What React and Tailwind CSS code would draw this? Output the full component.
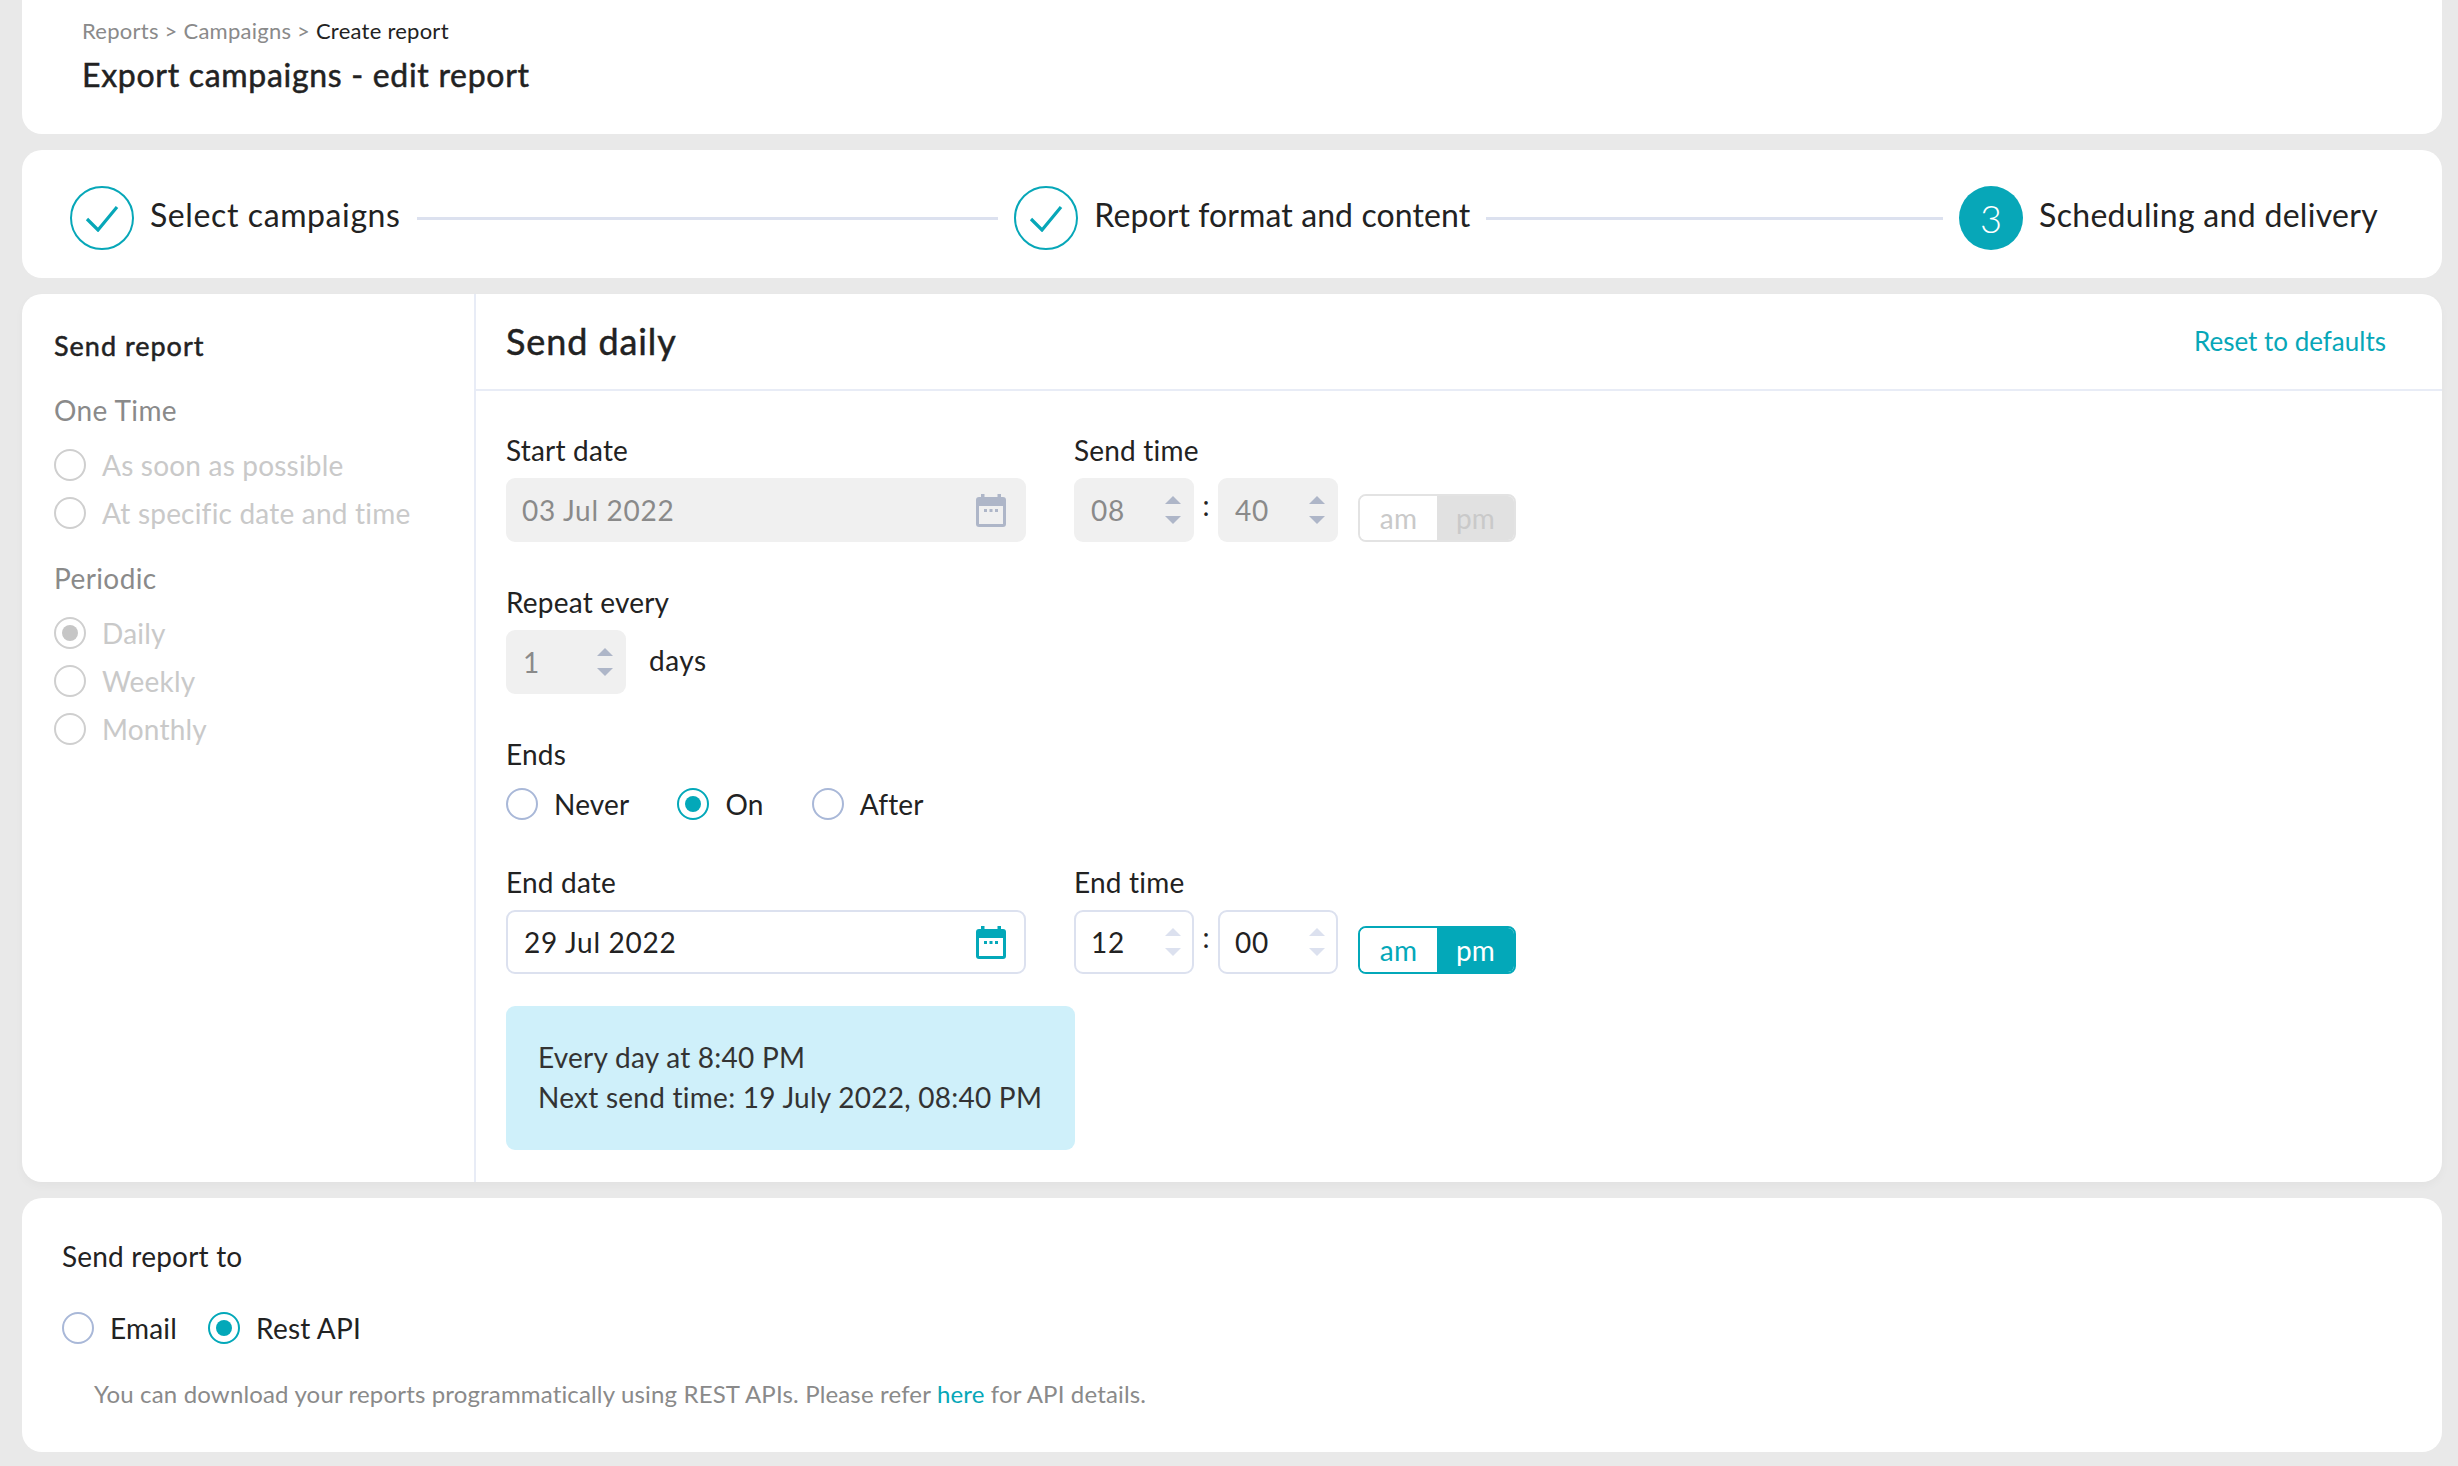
import React from "react";

function CheckCircle() {
  return (
    <div className="flex h-[64px] w-[64px] shrink-0 items-center justify-center rounded-full border-2 border-[#07a7b8]">
      <svg width="34" height="27" viewBox="0 0 34 27" fill="none">
        <path d="M2 14 L13 25 L32 2" stroke="#07a7b8" strokeWidth="3.2" />
      </svg>
    </div>
  );
}

function Step({ label, number, tracking }) {
  return (
    <div className="flex shrink-0 items-center">
      {number ? (
        <div className="flex h-[64px] w-[64px] shrink-0 items-center justify-center rounded-full bg-[#07a7b8] text-[38px] font-light text-white">
          {number}
        </div>
      ) : (
        <CheckCircle />
      )}
      <span className={`ml-[16px] -mt-[6px] text-[32px] text-[#222] ${tracking}`}>{label}</span>
    </div>
  );
}

function Radio({ label, checked, disabled }) {
  let ring = "border-[#a9b8d8]";
  let dot = "bg-[#03a8b9]";
  if (checked) ring = "border-[#03a8b9]";
  if (disabled) {
    ring = "border-[#cfcfcf]";
    dot = "bg-[#c6c6c6]";
  }
  return (
    <div className="flex h-[32px] items-center">
      <span className={`flex h-[32px] w-[32px] shrink-0 items-center justify-center rounded-full border-2 ${ring}`}>
        {checked && <span className={`h-[16px] w-[16px] rounded-full ${dot}`} />}
      </span>
      <span className={`ml-[16px] text-[28px] leading-[32px] ${disabled ? "text-[#c9c9c9]" : "text-[#222]"}`}>{label}</span>
    </div>
  );
}

function CalendarIcon({ color, bg }) {
  return (
    <svg width="30" height="33" viewBox="0 0 30 33" className="shrink-0">
      <rect x="5" y="0" width="3.5" height="6" fill={color} />
      <rect x="21.5" y="0" width="3.5" height="6" fill={color} />
      <rect x="0" y="3" width="30" height="30" rx="3" fill={color} />
      <rect x="3" y="12" width="24" height="18" fill={bg} />
      <rect x="8" y="15" width="3" height="3" fill={color} />
      <rect x="13.5" y="15" width="3" height="3" fill={color} />
      <rect x="19" y="15" width="3" height="3" fill={color} />
    </svg>
  );
}

function Arrows({ color }) {
  return (
    <svg width="16" height="28" viewBox="0 0 16 28" className="shrink-0">
      <path d="M8 0 L16 8 L0 8 Z" fill={color} />
      <path d="M0 20 L16 20 L8 28 Z" fill={color} />
    </svg>
  );
}

function DateInput({ value, disabled }) {
  return (
    <div
      className={`flex h-[64px] w-[520px] items-center justify-between rounded-[9px] text-[28px] tracking-[0.7px] ${
        disabled ? "bg-[#f0f0f0] pl-[16px] pr-[20px] text-[#8a8a8a]" : "border-2 border-[#dce1ef] bg-white pl-[16px] pr-[18px] text-[#222]"
      }`}
    >
      <span>{value}</span>
      <CalendarIcon color={disabled ? "#aeb6c8" : "#03a8b9"} bg={disabled ? "#f0f0f0" : "#ffffff"} />
    </div>
  );
}

function NumberInput({ value, disabled }) {
  return (
    <div
      className={`flex h-[64px] w-[120px] items-center justify-between rounded-[9px] text-[28px] tracking-[0.8px] ${
        disabled ? "bg-[#f0f0f0] pl-[17px] pr-[13px] text-[#8a8a8a]" : "border-2 border-[#dce1ef] bg-white pl-[15px] pr-[11px] text-[#222]"
      }`}
    >
      <span>{value}</span>
      <Arrows color={disabled ? "#aeb6c8" : "#dce1ef"} />
    </div>
  );
}

function AmPm({ disabled }) {
  return (
    <div
      className={`ml-[20px] flex h-[48px] w-[158px] self-end overflow-hidden rounded-[8px] border-2 text-[28px] leading-[44px] ${
        disabled ? "border-[#e3e3e3] text-[#c9c9c9]" : "border-[#03a8b9]"
      }`}
    >
      <span className={`flex-1 text-center ${disabled ? "bg-white" : "bg-white text-[#03a8b9]"}`}>am</span>
      <span className={`flex-1 text-center ${disabled ? "bg-[#e1e1e1]" : "bg-[#03a8b9] text-white"}`}>pm</span>
    </div>
  );
}

function TimeField({ label, hour, minute, disabled }) {
  return (
    <div className="ml-[48px]">
      <div className="mb-[12px] text-[28px] leading-[32px] text-[#222]">{label}</div>
      <div className="flex">
        <NumberInput value={hour} disabled={disabled} />
        <span className="w-[24px] text-center text-[28px] leading-[54px] text-[#222]">:</span>
        <NumberInput value={minute} disabled={disabled} />
        <AmPm disabled={disabled} />
      </div>
    </div>
  );
}

function Sidebar() {
  return (
    <div className="w-[454px] shrink-0 border-r-2 border-[#e8ecf6] pl-[32px] pt-[36px]">
      <div className="text-[27px] leading-[32px] tracking-[1px] text-[#222] [-webkit-text-stroke:0.5px_#222]">Send report</div>
      <div className="mt-[32px] text-[28px] leading-[32px] tracking-[0.4px] text-[#8a8a8a]">One Time</div>
      <div className="mt-[23px] flex flex-col gap-[16px]">
        <Radio label="As soon as possible" disabled />
        <Radio label="At specific date and time" disabled />
      </div>
      <div className="mt-[33px] text-[28px] leading-[32px] tracking-[0.4px] text-[#8a8a8a]">Periodic</div>
      <div className="mt-[23px] flex flex-col gap-[16px]">
        <Radio label="Daily" checked disabled />
        <Radio label="Weekly" disabled />
        <Radio label="Monthly" disabled />
      </div>
    </div>
  );
}

export default function App() {
  return (
    <div className="flex min-h-[1466px] flex-col gap-[16px] bg-[#e9e9e9] px-[22px] pr-[16px] font-['Lato','Noto_Sans',sans-serif] tracking-[0.2px]">
      <div className="h-[134px] rounded-b-[20px] bg-white pl-[60px] pt-[15px]">
        <div className="text-[22px] leading-[32px] tracking-[0.25px] text-[#8a8a8a]">
          Reports &gt; Campaigns &gt; <span className="text-[#222]">Create report</span>
        </div>
        <h1 className="mt-[8px] text-[32px] leading-[40px] tracking-[0.7px] text-[#222] [-webkit-text-stroke:0.5px_#222]">Export campaigns - edit report</h1>
      </div>

      <div className="flex h-[128px] items-center rounded-[20px] bg-white pl-[48px] pr-[64px] pt-[8px]">
        <Step label="Select campaigns" tracking="tracking-[0.6px]" />
        <div className="mx-[16px] h-[3px] flex-[582_1_0%] bg-[#dce1ef]" />
        <Step label="Report format and content" tracking="tracking-[0.1px]" />
        <div className="mx-[16px] h-[3px] flex-[457_1_0%] bg-[#dce1ef]" />
        <Step label="Scheduling and delivery" number="3" tracking="tracking-[0.3px]" />
      </div>

      <div className="flex h-[888px] rounded-[20px] bg-white shadow-[0_4px_10px_rgba(0,0,0,0.03)]">
        <Sidebar />
        <div className="flex-1">
          <div className="flex h-[97px] items-center justify-between border-b-2 border-[#e8ecf6] pl-[30px] pr-[56px]">
            <h2 className="-mt-[2px] text-[36px] tracking-[0.9px] text-[#222] [-webkit-text-stroke:0.5px_#222]">Send daily</h2>
            <span className="text-[26px] tracking-normal text-[#07a7b8]">Reset to defaults</span>
          </div>
          <div className="pl-[30px] pt-[43px]">
            <div className="flex">
              <div>
                <div className="mb-[12px] text-[28px] leading-[32px] text-[#222]">Start date</div>
                <DateInput value="03 Jul 2022" disabled />
              </div>
              <TimeField label="Send time" hour="08" minute="40" disabled />
            </div>

            <div className="mt-[44px] text-[28px] leading-[32px] text-[#222]">Repeat every</div>
            <div className="mt-[12px] flex items-center">
              <NumberInput value="1" disabled />
              <span className="ml-[23px] -mt-[4px] text-[28px] tracking-[0.5px] text-[#222]">days</span>
            </div>

            <div className="mt-[44px] text-[28px] leading-[32px] text-[#222]">Ends</div>
            <div className="mt-[18px] flex gap-[48px]">
              <Radio label="Never" />
              <Radio label="On" checked />
              <Radio label="After" />
            </div>

            <div className="mt-[46px] flex">
              <div>
                <div className="mb-[12px] text-[28px] leading-[32px] text-[#222]">End date</div>
                <DateInput value="29 Jul 2022" />
              </div>
              <TimeField label="End time" hour="12" minute="00" />
            </div>

            <div className="mt-[32px] h-[144px] w-[569px] rounded-[9px] bg-[#cff0fa] pl-[32px] pt-[31px] text-[28px] leading-[40px] tracking-[0.25px] text-[#333]">
              <div>Every day at 8:40 PM</div>
              <div>Next send time: 19 July 2022, 08:40 PM</div>
            </div>
          </div>
        </div>
      </div>

      <div className="h-[254px] rounded-[20px] bg-white pl-[40px] pt-[42px]">
        <div className="text-[28px] leading-[32px] text-[#222]">Send report to</div>
        <div className="mt-[40px] flex gap-[31px]">
          <Radio label="Email" />
          <Radio label="Rest API" checked />
        </div>
        <div className="ml-[32px] mt-[34px] text-[24px] leading-[32px] tracking-[0.16px] text-[#8a8a8a]">
          You can download your reports programmatically using REST APIs. Please refer{" "}
          <span className="text-[#07a7b8]">here</span> for API details.
        </div>
      </div>
    </div>
  );
}
